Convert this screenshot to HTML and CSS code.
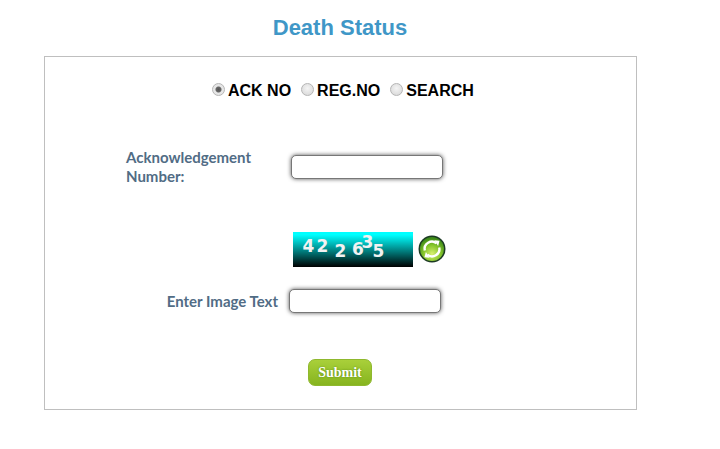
FILE: index.html
```html
<!DOCTYPE html>
<html lang="en">
<head>
    <meta charset="UTF-8">
    <title>Death Status</title>
    <link rel="stylesheet" href="styles.css">
</head>
<body>
    <h1 class="page-title">Death Status</h1>

    <div class="status-box">
        <div class="search-type">
            <label class="radio-option"><span class="radio checked"></span>ACK NO</label>
            <label class="radio-option"><span class="radio"></span>REG.NO</label>
            <label class="radio-option"><span class="radio"></span>SEARCH</label>
        </div>

        <div class="ack-row">
            <label class="field-label ack-label">Acknowledgement Number:</label>
            <input type="text" class="text-field">
        </div>

        <div class="captcha-row">
            <svg class="captcha" width="120" height="35" viewBox="0 0 120 35">
                <defs>
                    <linearGradient id="captcha-bg" x1="0" y1="0" x2="0" y2="1">
                        <stop offset="0.08" stop-color="#00ffff"/>
                        <stop offset="1" stop-color="#000000"/>
                    </linearGradient>
                </defs>
                <rect width="120" height="35" fill="url(#captcha-bg)"/>
                <g class="captcha-text">
                    <text x="9.5" y="20">4</text>
                    <text x="23.5" y="20">2</text>
                    <text x="41.5" y="25">2</text>
                    <text x="59" y="23">6</text>
                    <text x="68.5" y="16">3</text>
                    <text x="79.5" y="25">5</text>
                </g>
            </svg>
            <svg class="refresh" width="28" height="28" viewBox="0 0 28 28">
                <defs>
                    <radialGradient id="refresh-bg" cx="0.5" cy="0.7" r="0.65">
                        <stop offset="0" stop-color="#d8f070"/>
                        <stop offset="0.55" stop-color="#86c52c"/>
                        <stop offset="1" stop-color="#3c8a18"/>
                    </radialGradient>
                </defs>
                <circle cx="14" cy="14" r="13.5" fill="#1c3a24"/>
                <circle cx="14" cy="14" r="12" fill="url(#refresh-bg)"/>
                <path d="M6.8 15.5a7.3 7.3 0 0 1 11.8-7.2" fill="none" stroke="#fff" stroke-width="2.4"/>
                <path d="M21.2 12.5a7.3 7.3 0 0 1-11.8 7.2" fill="none" stroke="#fff" stroke-width="2.4"/>
                <path d="M16.4 5.2l5.2 0.6-1.5 5.2z" fill="#fff"/>
                <path d="M11.6 22.8l-5.2-0.6 1.5-5.2z" fill="#fff"/>
            </svg>
        </div>

        <div class="image-text-row">
            <label class="field-label image-label">Enter Image Text</label>
            <input type="text" class="text-field">
        </div>

        <div class="submit-row">
            <button class="submit-btn">Submit</button>
        </div>
    </div>
</body>
</html>
```

FILE: styles.css
```css
body {
    margin: 0;
    background-color: #fff;
    font-family: "Liberation Sans", Arial, sans-serif;
}
.page-title {
    width: 592px;
    margin: 0 0 0 44px;
    padding-top: 15px;
    height: 56px;
    box-sizing: border-box;
    text-align: center;
    font-size: 22px;
    line-height: 26px;
    font-weight: bold;
    color: #3f97c7;
}
.status-box {
    width: 593px;
    height: 354px;
    margin-left: 44px;
    box-sizing: border-box;
    border: 1px solid #bfbfbf;
}
.search-type {
    display: flex;
    margin: 25px 0 0 167px;
    gap: 10px;
}
.radio-option {
    display: flex;
    align-items: center;
    font-size: 16px;
    line-height: 18px;
    font-weight: bold;
    color: #000;
}
.radio {
    width: 13px;
    height: 13px;
    margin-right: 3px;
    margin-bottom: 3px;
    box-sizing: border-box;
    border: 1px solid #b5b5b5;
    border-radius: 50%;
    background: radial-gradient(circle at 50% 40%, #f4f4f4, #d4d4d4);
}
.radio.checked {
    background: radial-gradient(circle, #555 0, #666 2.5px, #e6e6e6 3.5px);
}
.ack-row {
    display: flex;
    align-items: center;
    margin: 48px 0 0 81px;
}
.field-label {
    font-family: Lato, "Open Sans", sans-serif;
    font-size: 15px;
    line-height: 19px;
    font-weight: bold;
    color: #516c85;
}
.ack-label {
    width: 165px;
    padding-right: 30px;
    box-sizing: border-box;
}
.text-field {
    width: 152px;
    height: 24px;
    padding: 0;
    box-sizing: border-box;
    border: 1px solid #777;
    border-radius: 5px;
    background-color: #fff;
    box-shadow: 0 0 4px #555;
}
.captcha-row {
    display: flex;
    align-items: flex-start;
    margin: 46px 0 0 248px;
}
.captcha {
    display: block;
}
.captcha-text {
    font-family: "DejaVu Sans", sans-serif;
    font-size: 17px;
    font-weight: bold;
    fill: #f2f2f2;
}
.refresh {
    display: block;
    margin: 3px 0 0 5px;
}
.image-text-row {
    display: flex;
    align-items: center;
    justify-content: flex-end;
    width: 396px;
    margin-top: 22px;
}
.image-label {
    margin-right: 11px;
}
.submit-row {
    margin: 46px 0 0 263px;
}
.submit-btn {
    display: block;
    width: 64px;
    height: 27px;
    padding: 0;
    border: 1px solid #8fb82e;
    border-radius: 7px;
    background: linear-gradient(#a9d03a, #86b41f);
    font-family: "Liberation Serif", "Times New Roman", serif;
    font-size: 14px;
    font-weight: bold;
    color: #fff;
    text-shadow: 0 0 2px #5d8a12;
}
```
